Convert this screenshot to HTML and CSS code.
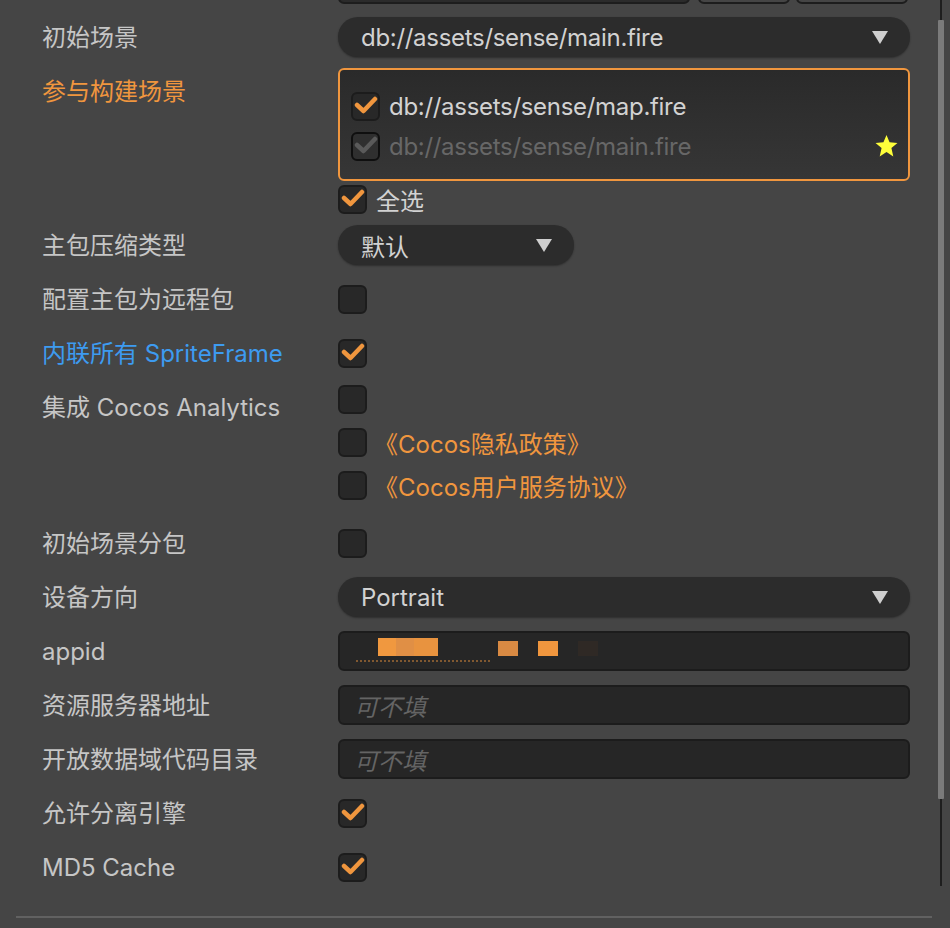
FILE: index.html
```html
<!DOCTYPE html>
<html lang="zh">
<head>
<meta charset="utf-8">
<title>Build settings</title>
<link rel="stylesheet" href="styles.css">
</head>
<body>
<div class="panel">
  <div class="stub"><span class="stub-a"></span><span class="stub-b"></span><span class="stub-c"></span></div>

  <div class="row">
    <div class="label">初始场景</div>
    <div class="field">
      <div class="select">
        <span class="value path">db://assets/sense/main.fire</span>
        <svg class="caret" width="16" height="13" viewBox="0 0 16 13"><polygon points="0,0 16,0 8,13" fill="#cfcfcf"/></svg>
      </div>
    </div>
  </div>

  <div class="row tall">
    <div class="label orange">参与构建场景</div>
    <div class="field scene-field">
      <div class="scene-box">
        <div class="scene-item">
          <span class="cb on"><svg viewBox="0 0 25 25"><polyline points="4,11 10.5,17 22,5" /></svg></span>
          <span class="value path">db://assets/sense/map.fire</span>
        </div>
        <div class="scene-item">
          <span class="cb disabled"><svg viewBox="0 0 25 25"><polyline points="4,11 10.5,17 22,5" /></svg></span>
          <span class="value path dim">db://assets/sense/main.fire</span>
          <svg class="star" width="23" height="22" viewBox="0 0 22 21"><polygon points="11,0 13.9,7 21.5,7.6 15.7,12.5 17.5,20.5 11,16.3 4.5,20.5 6.3,12.5 0.5,7.6 8.1,7" fill="#ffff3a"/></svg>
        </div>
      </div>
      <div class="select-all">
        <span class="cb on"><svg viewBox="0 0 25 25"><polyline points="4,11 10.5,17 22,5" /></svg></span>
        <span class="value">全选</span>
      </div>
    </div>
  </div>

  <div class="row">
    <div class="label">主包压缩类型</div>
    <div class="field">
      <div class="select short">
        <span class="value">默认</span>
        <svg class="caret" width="16" height="13" viewBox="0 0 16 13"><polygon points="0,0 16,0 8,13" fill="#cfcfcf"/></svg>
      </div>
    </div>
  </div>

  <div class="row">
    <div class="label">配置主包为远程包</div>
    <div class="field"><span class="cb"></span></div>
  </div>

  <div class="row">
    <div class="label blue">内联所有 SpriteFrame</div>
    <div class="field"><span class="cb on"><svg viewBox="0 0 25 25"><polyline points="4,11 10.5,17 22,5" /></svg></span></div>
  </div>

  <div class="row tall">
    <div class="label">集成 Cocos Analytics</div>
    <div class="field analytics">
      <div class="line"><span class="cb"></span></div>
      <div class="line"><span class="cb"></span><span class="link">《Cocos隐私政策》</span></div>
      <div class="line"><span class="cb"></span><span class="link">《Cocos用户服务协议》</span></div>
    </div>
  </div>

  <div class="row">
    <div class="label">初始场景分包</div>
    <div class="field"><span class="cb"></span></div>
  </div>

  <div class="row">
    <div class="label">设备方向</div>
    <div class="field">
      <div class="select">
        <span class="value">Portrait</span>
        <svg class="caret" width="16" height="13" viewBox="0 0 16 13"><polygon points="0,0 16,0 8,13" fill="#cfcfcf"/></svg>
      </div>
    </div>
  </div>

  <div class="row">
    <div class="label">appid</div>
    <div class="field">
      <div class="input masked">
        <span class="mask m1"></span>
        <span class="mask m2"></span>
        <span class="mask m3"></span>
        <span class="mask m4"></span>
        <span class="mask-trace"></span>
      </div>
    </div>
  </div>

  <div class="row">
    <div class="label">资源服务器地址</div>
    <div class="field"><div class="input"><span class="ph">可不填</span></div></div>
  </div>

  <div class="row">
    <div class="label">开放数据域代码目录</div>
    <div class="field"><div class="input"><span class="ph">可不填</span></div></div>
  </div>

  <div class="row">
    <div class="label">允许分离引擎</div>
    <div class="field"><span class="cb on"><svg viewBox="0 0 25 25"><polyline points="4,11 10.5,17 22,5" /></svg></span></div>
  </div>

  <div class="row">
    <div class="label">MD5 Cache</div>
    <div class="field"><span class="cb on"><svg viewBox="0 0 25 25"><polyline points="4,11 10.5,17 22,5" /></svg></span></div>
  </div>

  <div class="rule"></div>

  <div class="scroll-track"></div>
  <div class="scroll-thumb"></div>
</div>
</body>
</html>
```

FILE: styles.css
```css
html, body {
  margin: 0;
  padding: 0;
  background: #454545;
}

body {
  font-family: "Inter", "Noto Sans CJK SC", sans-serif;
  font-size: 24px;
  color: #c6c6c6;
  width: 950px;
  height: 928px;
  overflow: hidden;
}

.panel {
  position: relative;
  box-sizing: border-box;
  width: 950px;
  height: 928px;
  padding: 0 40px 0 42px;
}

.stub {
  display: flex;
  align-items: flex-end;
  height: 4px;
  overflow: hidden;
  margin: 0 0 6px 296px;
}

.stub span {
  display: block;
  box-sizing: border-box;
  height: 14px;
  border: 2px solid #1d1d1d;
  border-radius: 0 0 6px 6px;
}

.stub-a { width: 352px; background: #2b2b2b; }
.stub-b { width: 92px; margin-left: 8px; }
.stub-c { width: 112px; margin-left: 6px; }

.row {
  display: flex;
  align-items: center;
  height: 54px;
}

.row.tall {
  align-items: flex-start;
  height: auto;
}

.label {
  width: 296px;
  flex: none;
  line-height: 54px;
  padding-top: 1px;
  white-space: nowrap;
}

.label.orange { color: #f0963e; }
.label.blue { color: #3d9bf0; }

.field {
  flex: 1;
  display: flex;
  align-items: center;
}

.value {
  color: #d2d2d2;
  white-space: nowrap;
}

.value.path { letter-spacing: -0.3px; }

.value.dim { color: #676767; }

.select {
  box-sizing: border-box;
  flex: 1;
  height: 40px;
  border-radius: 20px;
  background: #2c2c2c;
  box-shadow: 0 1px 2px rgba(0, 0, 0, 0.35);
  display: flex;
  align-items: center;
  padding: 0 22px 0 23px;
}

.select.short {
  flex: none;
  width: 236px;
}

.caret {
  margin-left: auto;
  flex: none;
}

.cb {
  box-sizing: border-box;
  width: 29px;
  height: 29px;
  flex: none;
  border: 2px solid #1c1c1c;
  border-radius: 6px;
  background: #282828;
  display: flex;
}

.cb svg {
  width: 25px;
  height: 25px;
}

.cb polyline {
  fill: none;
  stroke: #f0963e;
  stroke-width: 4.5;
  stroke-linecap: round;
  stroke-linejoin: round;
}

.cb.disabled {
  border-color: #0f0f0f;
  background: #2f2f2f;
}

.cb.disabled polyline { stroke: #5a5a5a; }

.scene-field {
  flex-direction: column;
  align-items: stretch;
  padding-top: 4px;
}

.scene-box {
  box-sizing: border-box;
  height: 113px;
  border: 2px solid #f0963e;
  border-radius: 6px;
  background: linear-gradient(#2a2a2a, #363636);
  padding: 16px 10px 13px 11px;
}

.scene-item {
  display: flex;
  align-items: center;
  height: 40px;
  gap: 9px;
}

.star {
  margin-left: auto;
}

.select-all {
  display: flex;
  align-items: center;
  gap: 9px;
  height: 29px;
  margin: 4px 0 4px;
}

.analytics {
  flex-direction: column;
  align-items: stretch;
  padding: 5px 0 16px;
  gap: 14px;
}

.analytics .line {
  display: flex;
  align-items: center;
  height: 29px;
  gap: 7px;
}

.link {
  color: #f0963e;
  white-space: nowrap;
}

.input {
  position: relative;
  box-sizing: border-box;
  flex: 1;
  height: 40px;
  border: 2px solid #1c1c1c;
  border-radius: 6px;
  background: #262626;
  display: flex;
  align-items: center;
  padding-left: 14px;
}

.ph {
  color: #646464;
  font-style: italic;
}

.mask {
  position: absolute;
  top: 8px;
  height: 17px;
}

.m1 { left: 38px; width: 60px; top: 5px; height: 18px; background: linear-gradient(90deg, #f0983f 0 30%, #e08f45 30% 60%, #e8933f 60%); }
.m2 { left: 158px; width: 20px; top: 8px; height: 15px; background: #d98a43; }
.m3 { left: 198px; width: 20px; top: 8px; height: 15px; background: #f0963e; }
.m4 { left: 238px; width: 20px; top: 8px; height: 15px; background: #2f2925; }

.mask-trace {
  position: absolute;
  left: 16px;
  top: 27px;
  width: 134px;
  height: 0;
  border-top: 2px dotted rgba(240, 150, 62, 0.45);
}

.rule {
  height: 2px;
  width: 916px;
  margin: 22px 0 0 -26px;
  background: #616161;
}

.scroll-track {
  position: absolute;
  left: 940px;
  top: 0;
  width: 2px;
  height: 886px;
  background: #1e1e1e;
}

.scroll-thumb {
  position: absolute;
  left: 938px;
  top: 20px;
  width: 6px;
  height: 779px;
  border-radius: 1px;
  background: #7b7b7b;
}
```
